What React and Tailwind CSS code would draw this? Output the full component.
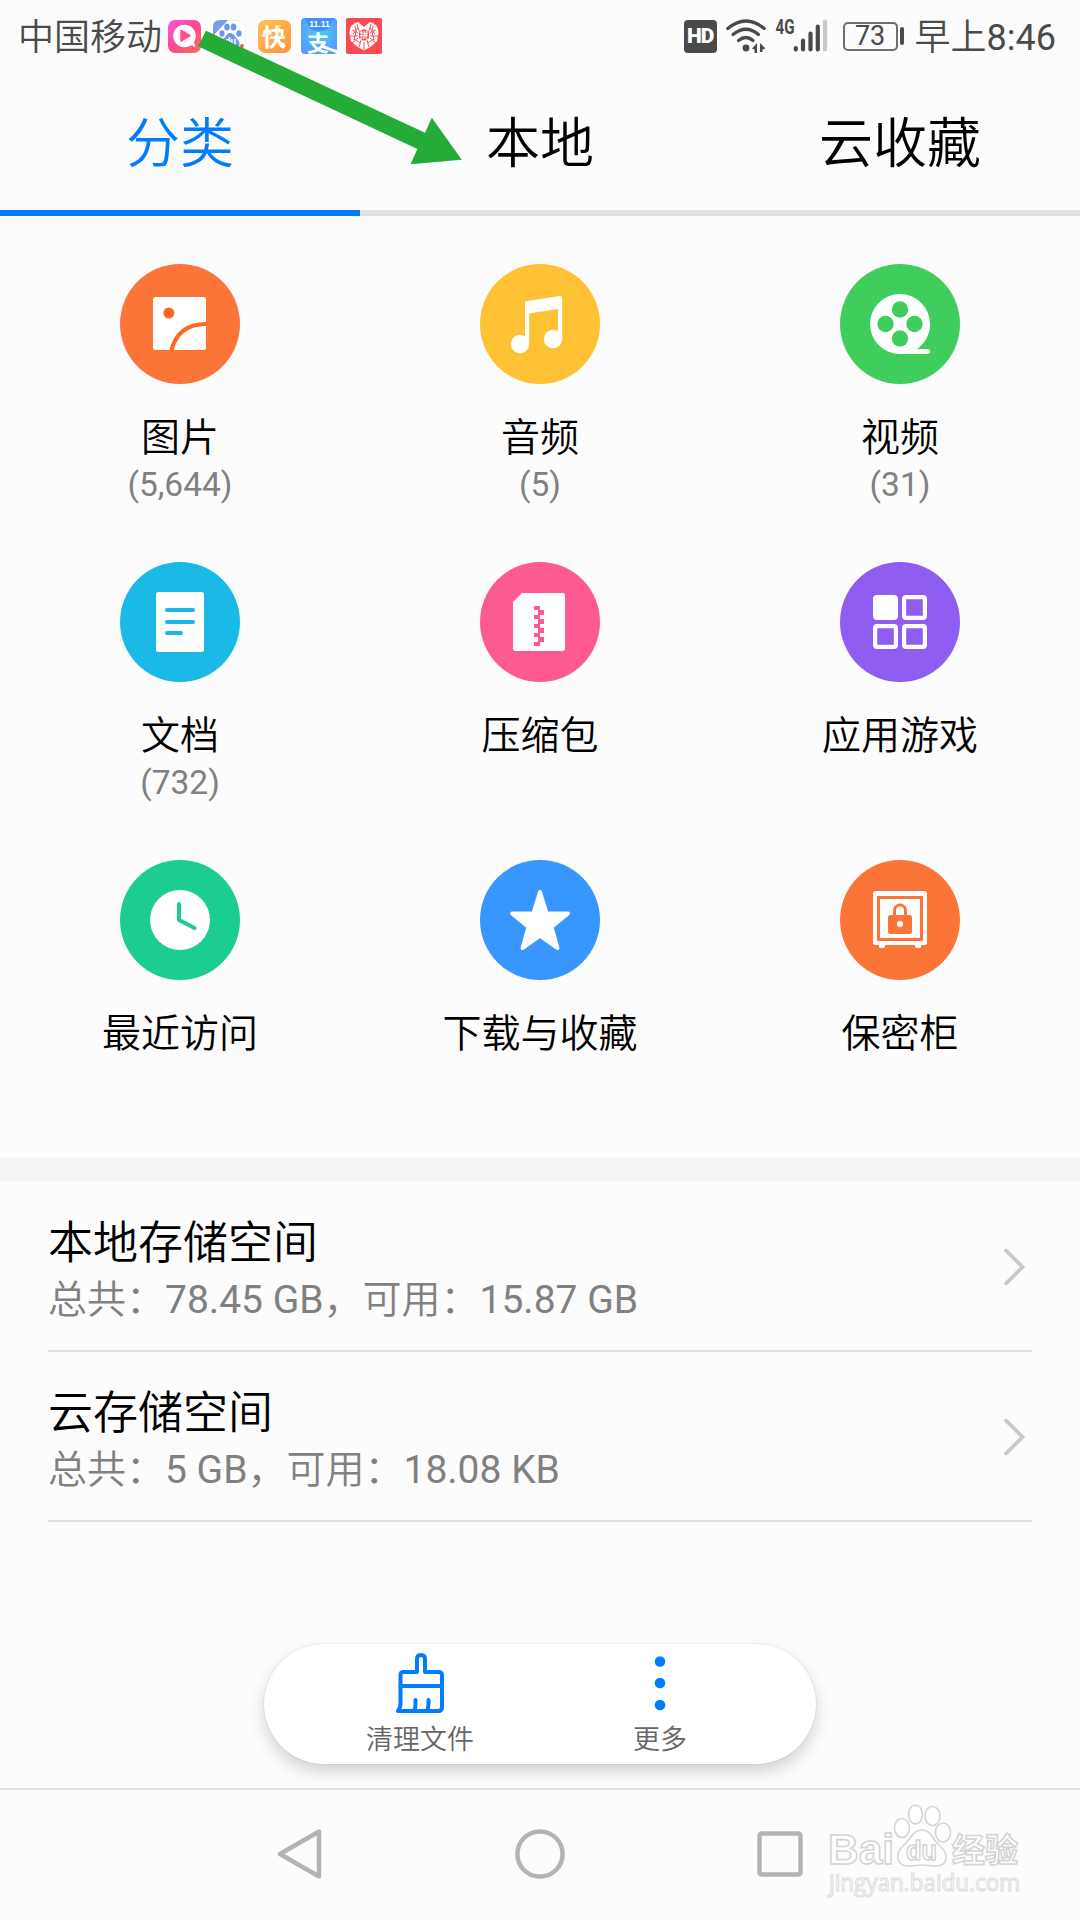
const WHITE = '#ffffff';

function AppBadges() {
  return (
    <div className="flex items-center">
      <svg width="33" height="33" viewBox="0 0 33 33">
        <defs>
          <linearGradient id="pink" x1="0" y1="0" x2="1" y2="1">
            <stop offset="0" stopColor="#f957dd" />
            <stop offset="0.5" stopColor="#fb4a8e" />
            <stop offset="1" stopColor="#ff6a5a" />
          </linearGradient>
        </defs>
        <rect width="33" height="33" rx="7" fill="url(#pink)" />
        <circle cx="16.5" cy="16" r="11.300" fill={WHITE} />
        <path d="M20 24l6-2 1.500 5z" fill={WHITE} />
        <circle cx="16.500" cy="16" r="7" fill="#fff0f6" />
        <path d="M13 10.500v10.500l9-5.300z" fill="#fb5088" stroke="#fb5088" strokeWidth="1.500" strokeLinejoin="round" />
      </svg>
      <svg className="ml-3" width="33" height="33" viewBox="0 0 33 33">
        <rect x="0.5" y="0.5" width="32" height="32" rx="7" fill={WHITE} stroke="#eeeeee" />
        <path d="M7 0h8L0 16V7q0-7 7-7z" fill="#7c9cea" />
        <g fill="#6f95f2">
          <ellipse cx="14" cy="7" rx="2.8" ry="3.6" />
          <ellipse cx="20.5" cy="7" rx="2.8" ry="3.6" />
          <ellipse cx="9" cy="13.5" rx="2.6" ry="3.3" />
          <ellipse cx="26" cy="13.5" rx="2.6" ry="3.3" />
          <path d="M17.3 13c4 0 4.500 4 7.700 7 3 3.500 1.500 8-3 8h-9.500c-4.500 0-6-4.500-3-8 3.300-3 4-7 7.800-7z" />
        </g>
        <text x="17.500" y="25" textAnchor="middle" fontSize="10" fontWeight="700" fill={WHITE} fontFamily="Roboto, sans-serif">du</text>
        <circle cx="29" cy="26" r="2" fill="#f05a5a" />
      </svg>
      <svg className="ml-3 overflow-visible" width="33" height="33" viewBox="0 0 33 33">
        <defs>
          <linearGradient id="amber" x1="0" y1="0" x2="1" y2="1">
            <stop offset="0" stopColor="#fec354" />
            <stop offset="1" stopColor="#fd9241" />
          </linearGradient>
        </defs>
        <rect width="33" height="33" rx="7" fill="url(#amber)" />
        <path d="M19 5h4l-1 5h3l-7 8 1.500-6H17z" fill="#ffe14a" />
        <text x="16" y="25.500" textAnchor="middle" fontSize="24" fontWeight="700" fill={WHITE} fontFamily="'Noto Sans CJK SC', sans-serif">快</text>
        <circle cx="24.500" cy="25" r="2.500" fill={WHITE} />
      </svg>
      <svg className="ml-2.5 overflow-visible" width="36" height="36" viewBox="0 0 36 36">
        <defs>
          <radialGradient id="azure" cx="0.5" cy="0.4" r="0.6">
            <stop offset="0" stopColor="#46d3f8" />
            <stop offset="1" stopColor="#579bfa" />
          </radialGradient>
        </defs>
        <rect width="36" height="36" rx="4" fill="url(#azure)" />
        <path d="M4 0h29l-6 11q-9 5-18 0z" fill="#4290f2" />
        <text x="18.500" y="9" textAnchor="middle" fontSize="8.500" fontWeight="700" fill={WHITE} fontFamily="'Liberation Sans', sans-serif">11.11</text>
        <text x="17" y="33" textAnchor="middle" fontSize="22" fontWeight="700" fill={WHITE} fontFamily="'Noto Sans CJK SC', sans-serif">支</text>
        <path d="M20 27q6 4 16 6.500" fill="none" stroke={WHITE} strokeWidth="3" />
      </svg>
      <svg className="ml-[9px]" width="36" height="36" viewBox="0 0 36 36">
        <rect width="36" height="36" rx="2" fill="#fa4b52" />
        <path d="M18 9L12 4Q3.500 6 3.500 15L5 23q4 5 13 9.500Q27 28 31 23l1.500-8Q32.500 6 24 4z" fill={WHITE} />
        <g stroke="#fa4b52" strokeWidth="1" fill="none">
          <path d="M6 12l6 3M3.500 18h8M6 25l6-5M11 6l2 7M30 12l-6 3M32.500 18h-8M30 25l-6-5M25 6l-2 7M13 29l2-7M23 29l-2-7M18 24v8M9 8l1 6-2 8M27 8l-1 6 2 8M7 16l5-6M29 16l-5-6M8 21l6 4M28 21l-6 4" />
        </g>
        <path d="M13 13.500l5-2.500 5 2.500v6.500L18 23l-5-3z" fill="#fa4b52" />
        <text x="18" y="20.300" textAnchor="middle" fontSize="8.500" fontWeight="700" fill={WHITE} fontFamily="'Noto Sans CJK SC', sans-serif">拼</text>
      </svg>
    </div>
  );
}

function StatusBar() {
  return (
    <div className="flex h-[72px] items-center text-[36px] leading-[72px] text-[#4a4a4a]">
      <span className="ml-[18px] w-[144px] pt-[4px] font-[350]">中国移动</span>
      <div className="ml-[6px]">
        <AppBadges />
      </div>
      <div className="ml-auto mr-[24px] flex items-center">
        <div className="flex h-[33px] w-[33px] items-center justify-center rounded-[4px] bg-[#4a4a4a] font-['Roboto'] text-[21px] leading-none font-black tracking-[-1px] text-white">
          HD
        </div>
        <svg className="ml-[9px]" width="41" height="34" viewBox="0 0 41 34">
          <g fill="none" stroke="#4a4a4a" strokeWidth="3.200" strokeLinecap="round">
            <path d="M1.800 9.500Q20 -5.500 38.200 9.500" />
            <path d="M7 15.500Q20 5 32.500 15.500" />
            <path d="M12.500 21.500Q20 15.500 27 21.500" />
          </g>
          <circle cx="20" cy="29" r="3.400" fill="#4a4a4a" />
          <path d="M31 24v10h-2.500v-3.500L26 29.500zM34 24l5.500 5.500-3 1V33H34z" fill="#4a4a4a" />
        </svg>
        <svg className="ml-[8px] overflow-visible" width="53" height="36" viewBox="0 0 53 36">
          <text x="0.500" y="16" fontSize="21" fontWeight="700" fill="#4a4a4a" fontFamily="Roboto, sans-serif" textLength="19" lengthAdjust="spacingAndGlyphs">4G</text>
          <g strokeWidth="4.200" strokeLinecap="round" stroke="#4a4a4a">
            <path d="M20.800 31.500v-1.500M28 31.500v-9M35.500 31.500v-16M42.800 31.500v-23" />
            <path d="M50 31.500v-28" stroke="#c8c8c8" />
          </g>
        </svg>
        <div className="ml-[15px] flex h-[29px] w-[55px] items-center justify-center rounded-[5px] border-2 border-[#6e6e6e] text-[27px] leading-none">
          73
        </div>
        <div className="ml-[2px] h-[18px] w-[4px] rounded-full bg-[#4a4a4a]" />
        <span className="ml-[11px] pt-[4px]"><span className="font-[350]">早上</span>8:46</span>
      </div>
    </div>
  );
}

function Tabs() {
  return (
    <div className="grid grid-cols-3 text-center text-[54px] leading-[132px] font-[350] text-black">
      <div className="h-[144px] border-b-[6px] border-[#007dff] pt-[7px] text-[#007dff]">分类</div>
      <div className="h-[144px] border-b-[6px] border-[#e1e1e1] pt-[7px]">本地</div>
      <div className="h-[144px] border-b-[6px] border-[#e1e1e1] pt-[7px]">云收藏</div>
    </div>
  );
}

/* Glyphs are drawn on a 120 x 120 grid, the size of the coloured disc. */
const glyphs = {
  image: (
    <>
      <rect x="33" y="33" width="53" height="53" rx="2.500" fill={WHITE} />
      <circle cx="48.800" cy="49" r="5.500" fill="#ff671f" />
      <path d="M51.500 86C56 69 68 60 86 60" fill="none" stroke="#ff671f" strokeWidth="4.200" />
    </>
  ),
  music: (
    <g fill={WHITE}>
      <circle cx="40" cy="80" r="9.200" />
      <circle cx="73" cy="75" r="9.200" />
      <path d="M45 80V39q0-1.800 1.800-2.100L80 32q2.200-.2 2.200 1.800V75H78V45L50.500 49.200Q49.200 49.500 49.200 51V80z" />
    </g>
  ),
  film: (
    <>
      <circle cx="60" cy="60" r="30" fill={WHITE} />
      <path d="M60 90h27.500q2.500 0 2.500-2.500t-2.500-2.500H77q13-10 13-25z" fill={WHITE} />
      <g fill="#3fce5c">
        <circle cx="60" cy="45.500" r="8.200" />
        <circle cx="60" cy="74.500" r="8.200" />
        <circle cx="45.500" cy="60" r="8.200" />
        <circle cx="74.500" cy="60" r="8.200" />
      </g>
    </>
  ),
  doc: (
    <>
      <rect x="36" y="30" width="48" height="60" rx="2.500" fill={WHITE} />
      <path d="M47 48h26M47 60h26M47 71h14" stroke="#1bb9e5" strokeWidth="4" strokeLinecap="round" />
    </>
  ),
  zip: (
    <>
      <path d="M42 31h40.500q2.500 0 2.500 2.500v53q0 2.500-2.500 2.500h-47q-2.500 0-2.500-2.500V40z" fill={WHITE} />
      <path d="M54 44h6v4h4v5h-4v4h4v5h-4v4h4v5h-4v4h4v5h-4v4h-6v-4h4v-5h-4v-4h4v-5h-4v-4h4v-5h-4v-4h4v-5h-4z" fill="#fd5a94" />
    </>
  ),
  apps: (
    <g fill="none" stroke={WHITE} strokeWidth="4.200">
      <rect x="35.100" y="35.100" width="20.800" height="20.800" rx="2" fill={WHITE} />
      <rect x="64.100" y="35.100" width="20.800" height="20.800" rx="2" />
      <rect x="35.100" y="64.100" width="20.800" height="20.800" rx="2" />
      <rect x="64.100" y="64.100" width="20.800" height="20.800" rx="2" />
    </g>
  ),
  clock: (
    <>
      <circle cx="60" cy="60" r="30" fill={WHITE} />
      <path d="M59 44v16l15.500 8" fill="none" stroke="#1bcd92" strokeWidth="4" strokeLinecap="round" strokeLinejoin="round" />
    </>
  ),
  star: (
    <path
      d="M60 32L66.700 53.500H88L71.500 67 77.500 88 60 75.500 42.500 88 48.500 67 32 53.500H53.300z"
      fill={WHITE}
      stroke={WHITE}
      strokeWidth="4"
      strokeLinejoin="round"
    />
  ),
  safe: (
    <>
      <path d="M35.500 31h49q2.500 0 2.500 2.500v49q0 2.500-2.500 2.500H81v1.500q0 1.500-1.500 1.500h-3q-1.500 0-1.500-1.500V85H45v1.500q0 1.500-1.500 1.500h-3q-1.500 0-1.500-1.500V85h-3.500q-2.500 0-2.500-2.500v-49q0-2.500 2.500-2.500z" fill={WHITE} />
      <rect x="38.500" y="37.500" width="43" height="42" fill="none" stroke="#fb7539" strokeWidth="3" />
      <rect x="48" y="55" width="24" height="19" rx="2.500" fill="#fb7539" />
      <path d="M54.500 56v-5.500a5.500 5.500 0 0 1 11 0V56" fill="none" stroke="#fb7539" strokeWidth="3" />
      <circle cx="60" cy="64" r="3" fill={WHITE} />
    </>
  ),
};

const categories = [
  { glyph: 'image', label: '图片', count: '(5,644)', disc: 'bg-[#fb7539]' },
  { glyph: 'music', label: '音频', count: '(5)', disc: 'bg-[#fec133]' },
  { glyph: 'film', label: '视频', count: '(31)', disc: 'bg-[#3fce5c]' },
  { glyph: 'doc', label: '文档', count: '(732)', disc: 'bg-[#1bb9e5]' },
  { glyph: 'zip', label: '压缩包', disc: 'bg-[#fd5a94]' },
  { glyph: 'apps', label: '应用游戏', disc: 'bg-[#8f5df0]' },
  { glyph: 'clock', label: '最近访问', disc: 'bg-[#1bcd92]' },
  { glyph: 'star', label: '下载与收藏', disc: 'bg-[#3797ff]' },
  { glyph: 'safe', label: '保密柜', disc: 'bg-[#fb7539]' },
];

function Category({ glyph, label, count, disc }) {
  return (
    <div className="flex h-[298px] flex-col items-center">
      <div className={`h-[120px] w-[120px] rounded-full ${disc}`}>
        <svg width="120" height="120" viewBox="0 0 120 120">
          {glyphs[glyph]}
        </svg>
      </div>
      <div className="mt-[30px] text-[39px] leading-[48px] font-[350] text-black">{label}</div>
      {count && <div className="mt-[3px] text-[33.5px] leading-[40px] text-[#808080]">{count}</div>}
    </div>
  );
}

function StorageRow({ title, total, free }) {
  return (
    <div className="flex h-[170px] items-center justify-between border-b-2 border-[#e1e1e1]">
      <div className="pt-[10px]">
        <div className="text-[45px] leading-[58px] font-[350] text-black">{title}</div>
        <div className="text-[39px] leading-[54px] whitespace-pre text-[#808080]">
          <span className="font-[350]">总共：</span>
          {total}
          <span className="font-[350]">，可用：</span>
          {free}
        </div>
      </div>
      <svg className="mr-[5px]" width="24" height="40" viewBox="0 0 24 40">
        <path d="M3 4.500l16.500 16.500L3 37.500" fill="none" stroke="#c8c8c8" strokeWidth="3.800" strokeLinecap="round" />
      </svg>
    </div>
  );
}

function ActionPill() {
  return (
    <div className="mx-auto flex h-[120px] w-[552px] justify-center rounded-full bg-white text-[27px] leading-[36px] text-[#666666] shadow-[0_8px_16px_rgba(0,0,0,0.16),0_0_2px_rgba(0,0,0,0.15)]">
      <div className="flex w-[240px] flex-col items-center pt-[9px]">
        <svg width="48" height="60" viewBox="0 0 48 60" fill="none" stroke="#007dff" strokeWidth="4" strokeLinejoin="round" strokeLinecap="round">
          <path d="M21 19V6q0-4 4-4t4 4v13H42q4 0 4 3V54q0 4-4 4H2Q4.500 55 4.500 50V22q0-3 3-3z" />
          <path d="M4.500 33H46M19.500 47v4q0 4-1.500 7M32.500 47v4q0 4-1.500 7" />
        </svg>
        <span className="mt-[9px] font-[350]">清理文件</span>
      </div>
      <div className="flex w-[240px] flex-col items-center pt-[9px]">
        <svg width="48" height="60" viewBox="0 0 48 60" fill="#007dff">
          <circle cx="24" cy="8.500" r="5.300" />
          <circle cx="24" cy="30" r="5.300" />
          <circle cx="24" cy="52" r="5.300" />
        </svg>
        <span className="mt-[9px] font-[350]">更多</span>
      </div>
    </div>
  );
}

function Watermark() {
  return (
    <svg className="absolute top-[12px] right-[50px]" width="204" height="104" viewBox="0 0 204 104">
      <g fill={WHITE} stroke="#d4d4d4" strokeWidth="1.600">
        <text x="2" y="62" fontSize="43" fontWeight="700" fontFamily="'Liberation Sans', sans-serif" textLength="66" lengthAdjust="spacingAndGlyphs">Bai</text>
        <ellipse cx="76" cy="26" rx="7.500" ry="9.500" />
        <ellipse cx="89.500" cy="12.500" rx="7" ry="9.500" />
        <ellipse cx="106.500" cy="14" rx="7.500" ry="9.500" />
        <ellipse cx="117" cy="30.500" rx="7.500" ry="9.500" />
        <path d="M96 28c9 0 10 9 18 16 10 9 7 20-4 20-5 0-9-1-14-1s-9 1-13 1c-12 0-15-11-6-20 8-7 10-16 19-16z" />
        <text x="80" y="58" fontSize="28" fontFamily="'Liberation Sans', sans-serif" fontWeight="700" textLength="31" lengthAdjust="spacingAndGlyphs">du</text>
        <text x="126" y="60" fontSize="33" fontWeight="700" fontFamily="'Noto Sans CJK SC', sans-serif">经验</text>
      </g>
      <text x="3" y="89" fontSize="23" fill={WHITE} stroke="#dedede" strokeWidth="1.100" fontFamily="'Open Sans', sans-serif" textLength="191" lengthAdjust="spacingAndGlyphs">jingyan.baidu.com</text>
    </svg>
  );
}

function NavBar() {
  return (
    <div className="relative flex h-[132px] items-center justify-center gap-[186px] border-t-2 border-[#e1e1e1] pb-[2px]">
      <svg width="54" height="54" viewBox="0 0 54 54" fill="none" stroke="#b3b3b3" strokeWidth="4.500" strokeLinejoin="round">
        <path d="M46 4.500V49.500L7 27z" />
      </svg>
      <svg width="54" height="54" viewBox="0 0 54 54" fill="none" stroke="#b3b3b3" strokeWidth="4.500">
        <circle cx="27" cy="27" r="22.600" />
      </svg>
      <svg width="54" height="54" viewBox="0 0 54 54" fill="none" stroke="#b3b3b3" strokeWidth="4.500">
        <rect x="6.500" y="6.500" width="41" height="41" rx="2" />
      </svg>
      <Watermark />
    </div>
  );
}

export default function App() {
  return (
    <div className="relative flex h-[1920px] w-[1080px] flex-col overflow-hidden bg-[#fcfcfc] font-['Roboto','Noto_Sans_CJK_SC',sans-serif] font-normal">
      <StatusBar />
      <Tabs />
      <div className="grid grid-cols-3 pt-12">
        {categories.map((c) => (
          <Category key={c.label} {...c} />
        ))}
      </div>
      <div className="h-6 bg-[#f5f5f5]" />
      <div className="px-12">
        <StorageRow title="本地存储空间" total="78.45 GB" free="15.87 GB" />
        <StorageRow title="云存储空间" total="5 GB" free="18.08 KB" />
      </div>
      <div className="mt-auto pb-[24px]">
        <ActionPill />
      </div>
      <NavBar />
      <svg className="absolute top-0 left-0" width="480" height="180" viewBox="0 0 480 180">
        <path d="M206 30.700L425 132.700 431.800 117.700 461.800 159.700 410.500 164.300 417.400 149 198 46.300z" fill="#25ab38" />
      </svg>
    </div>
  );
}
